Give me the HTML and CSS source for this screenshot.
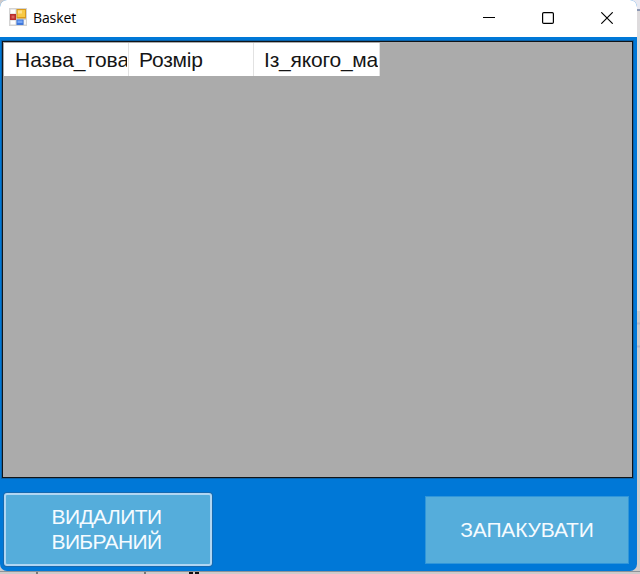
FILE: index.html
```html
<!DOCTYPE html>
<html lang="uk">
<head>
<meta charset="utf-8">
<title>Basket</title>
<link rel="stylesheet" href="styles.css">
</head>
<body>
<div class="backdrop" aria-hidden="true">
  <svg width="640" height="574" viewBox="0 0 640 574">
    <rect width="640" height="574" fill="#cfcbcb"/>
    <rect x="620" width="20" height="9" fill="#e9e9f1"/>
    <rect x="620" y="9" width="20" height="2" fill="#8b97b3"/>
    <rect x="637" y="11" width="3" height="300" fill="#dedbdd"/>
    <path d="M637 323.500h3M637 346.500h3" stroke="#b9b5c2" stroke-width="2"/>
    <rect y="571" width="640" height="1" fill="#8f9298"/>
    <path d="M37 572v2M145 572v2" stroke="#777" stroke-width="2"/>
    <path d="M189 573h4M195 573h4" stroke="#111" stroke-width="2"/>
  </svg>
</div>
<main class="window">
  <header class="titlebar">
    <svg class="app-icon" width="18" height="18" viewBox="0 0 18 18">
      <rect width="18" height="18" fill="#d3d3d3"/>
      <rect x="1.500" y="1.500" width="5" height="4" fill="#fff"/>
      <rect x="1.500" y="12.500" width="5" height="4" fill="#fff"/>
      <rect x="15" y="12" width="2" height="4.500" fill="#f5f5f5"/>
      <rect x="1" y="6" width="6" height="6" fill="#b92d2c"/>
      <rect x="2.500" y="7.500" width="3" height="3" fill="#d9625b"/>
      <rect x="7.500" y="1" width="9.500" height="9.500" fill="#d99a1c"/>
      <rect x="8.500" y="2" width="7.500" height="7" fill="#f8c944"/>
      <rect x="9" y="2.500" width="4" height="3" fill="#fde08a"/>
      <rect x="7.500" y="11.500" width="7" height="5.500" fill="#3f78dc"/>
      <rect x="8.500" y="12.500" width="5" height="2.500" fill="#76a6f5"/>
    </svg>
    <h1 class="title">Basket</h1>
    <div class="controls">
      <svg width="12" height="12" viewBox="0 0 12 12"><path d="M0 5.500h12" stroke="#000"/></svg>
      <svg width="12" height="12" viewBox="0 0 12 12"><rect x=".6" y=".6" width="10.800" height="10.800" rx="1.200" fill="none" stroke="#000" stroke-width="1.200"/></svg>
      <svg width="12" height="12" viewBox="0 0 12 12"><path d="M.3.3l11.400 11.400M11.700.3L.3 11.700" stroke="#000" stroke-width="1.150"/></svg>
    </div>
  </header>
  <section class="grid">
    <div class="columns">
      <div class="column"><span>Назва_това</span></div>
      <div class="column"><span>Розмір</span></div>
      <div class="column"><span>Із_якого_ма</span></div>
    </div>
  </section>
  <footer class="actions">
    <button class="action focused">ВИДАЛИТИ<br>ВИБРАНИЙ</button>
    <button class="action">ЗАПАКУВАТИ</button>
  </footer>
</main>
</body>
</html>
```
FILE: styles.css
```css
* { box-sizing: border-box; }
body { margin: 0; width: 640px; height: 574px; overflow: hidden; }
.backdrop { position: absolute; inset: 0; z-index: -1; }
.backdrop svg { display: block; }
.window {
  width: 637px;
  height: 571px;
  display: flex;
  flex-direction: column;
  background: #0078d7;
  border-radius: 7px;
  overflow: hidden;
}
.titlebar {
  height: 37px;
  flex: none;
  display: flex;
  align-items: center;
  padding: 0 24px 0 9px;
  background: #fff;
}
.app-icon { margin-top: -3px; }
.title {
  margin: -2px 0 0 6px;
  font: 400 14px/20px "Open Sans", "Noto Sans", sans-serif;
  letter-spacing: -0.1px;
  color: #000;
}
.controls { margin-left: auto; display: flex; gap: 47px; }
.controls svg { display: block; margin-top: -1px; }
.grid {
  width: 631px;
  height: 437px;
  margin: 4px 0 0 2px;
  flex: none;
  border: 1px solid #101418;
  outline: 1px solid #0861a9;
  background: #ababab;
  padding: 1px;
}
.columns {
  display: grid;
  grid-template-columns: 125px 125px 126px;
  height: 33px;
  width: 376px;
}
.column {
  min-width: 0;
  background: #fff;
  border-right: 1px solid #e2e2e2;
  padding: 0 1px 0 11px;
}
.column + .column { padding-left: 10px; }
.column span {
  display: block;
  overflow: hidden;
  white-space: nowrap;
  font: 21px/33px "Liberation Sans", Arial, sans-serif;
  letter-spacing: -0.2px;
  color: #151515;
}
.column:first-child span { letter-spacing: 0; }
.actions {
  flex: 1;
  display: flex;
  justify-content: space-between;
  align-items: flex-start;
  padding: 15px 8px 0 4px;
}
.action {
  width: 204px;
  height: 68px;
  margin-top: 2.500px;
  padding: 0;
  border: 1px solid #3096da;
  background: #55addb;
  color: #f5fbff;
  font: 21px/25px "Liberation Sans", Arial, sans-serif;
  letter-spacing: -0.15px;
}
.focused {
  width: 208px;
  height: 73px;
  margin-top: 0;
  padding: 0 3px 1px 0;
  border: 2px solid #b1d6f2;
  border-radius: 3px;
  box-shadow: 0 0 0 1px #1769af;
  letter-spacing: -0.6px;
}
```
